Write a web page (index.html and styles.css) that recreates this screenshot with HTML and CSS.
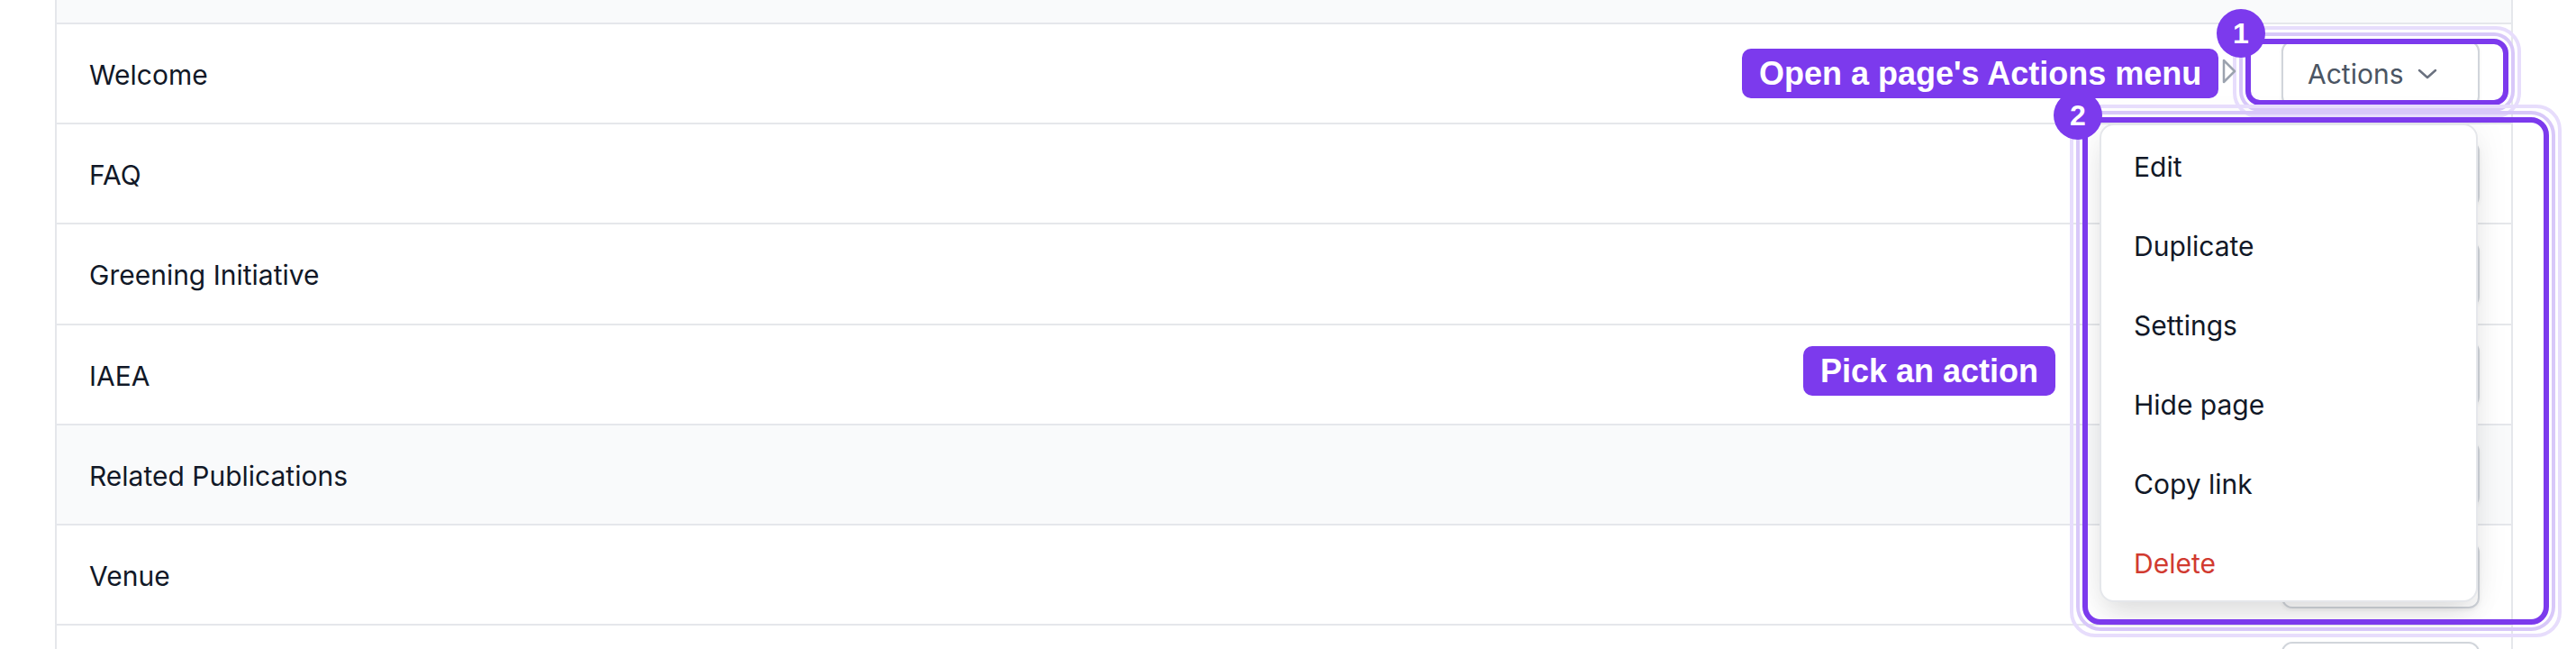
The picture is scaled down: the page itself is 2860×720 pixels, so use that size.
FILE: index.html
```html
<!DOCTYPE html>
<html lang="en">
<head>
    <meta charset="UTF-8">
    <title>Pages - Actions tour</title>
    <link rel="stylesheet" href="styles.css">
</head>
<body>

<div class="page">

    <div class="table">
        <div class="table-head"></div>

        <div class="row">
            <span class="title">Welcome</span>
            <button class="actions">Actions
                <svg width="22" height="12" viewBox="0 0 22 12"><polyline points="2,2 11,10 20,2"/></svg>
            </button>
        </div>
        <div class="row">
            <span class="title">FAQ</span>
            <button class="actions">Actions
                <svg width="22" height="12" viewBox="0 0 22 12"><polyline points="2,2 11,10 20,2"/></svg>
            </button>
        </div>
        <div class="row">
            <span class="title">Greening Initiative</span>
            <button class="actions">Actions
                <svg width="22" height="12" viewBox="0 0 22 12"><polyline points="2,2 11,10 20,2"/></svg>
            </button>
        </div>
        <div class="row">
            <span class="title">IAEA</span>
            <button class="actions">Actions
                <svg width="22" height="12" viewBox="0 0 22 12"><polyline points="2,2 11,10 20,2"/></svg>
            </button>
        </div>
        <div class="row row-hover">
            <span class="title">Related Publications</span>
            <button class="actions">Actions
                <svg width="22" height="12" viewBox="0 0 22 12"><polyline points="2,2 11,10 20,2"/></svg>
            </button>
        </div>
        <div class="row">
            <span class="title">Venue</span>
            <button class="actions">Actions
                <svg width="22" height="12" viewBox="0 0 22 12"><polyline points="2,2 11,10 20,2"/></svg>
            </button>
        </div>
        <!-- next row, only its top edge is on screen -->
        <div class="row">
            <span class="title"></span>
            <button class="actions"></button>
        </div>
    </div>

    <!-- dropdown opened from the Welcome row -->
    <div class="menu">
        <div class="menu-item">Edit</div>
        <div class="menu-item">Duplicate</div>
        <div class="menu-item">Settings</div>
        <div class="menu-item">Hide page</div>
        <div class="menu-item">Copy link</div>
        <div class="menu-item danger">Delete</div>
    </div>

    <!-- tour overlay -->
    <div class="spot spot-one"></div>
    <div class="spot spot-two"></div>
    <svg class="pointer" width="18" height="30" viewBox="0 0 18 30">
        <polygon points="3,3 3,27 15,15"/>
    </svg>
    <div class="badge badge-one">1</div>
    <div class="badge badge-two">2</div>
    <div class="callout callout-one">Open a page's Actions menu</div>
    <div class="callout callout-two">Pick an action</div>

</div>

</body>
</html>
```

FILE: styles.css
```css
* {
    box-sizing: border-box;
}

body {
    margin: 0;
    background-color: #ffffff;
    font-family: Inter, "Noto Sans", sans-serif;
    overflow: hidden;
}

.page {
    position: relative;
    height: 720px;
    overflow: hidden;
}

/* table of pages */
.table {
    margin-left: 61px;
    width: 2729px;
    border-left: 2px solid #e5e7eb;
    border-right: 2px solid #e5e7eb;
}

.table-head {
    height: 27px;
    background-color: #f9fafb;
    border-bottom: 2px solid #e5e7eb;
}

.row {
    display: flex;
    align-items: center;
    justify-content: space-between;
    height: 111.2px;
    padding: 0 35px 0 36px;
    border-bottom: 2px solid #e5e7eb;
    background-color: #ffffff;
}

.row-hover {
    background-color: #f9fafb;
}

.title {
    font-size: 30px;
    color: #111827;
    padding-top: 3px;
}

.actions {
    display: flex;
    align-items: center;
    gap: 16px;
    width: 220px;
    height: 74px;
    padding: 0 0 0 27px;
    background-color: #ffffff;
    border: 2px solid #d1d5db;
    border-radius: 12px;
    box-shadow: 0 2px 4px rgba(0, 0, 0, 0.06);
    font-family: Inter, "Noto Sans", sans-serif;
    font-size: 30px;
    color: #4b5563;
}

.actions svg {
    fill: none;
    stroke: #6b7280;
    stroke-width: 2.5;
    stroke-linecap: round;
    stroke-linejoin: round;
}

/* dropdown */
.menu {
    position: absolute;
    left: 2331px;
    top: 137px;
    width: 420px;
    height: 531px;
    padding-top: 2px;
    background-color: #ffffff;
    border: 2px solid #e5e7eb;
    border-radius: 16px;
    box-shadow: 0 20px 30px -6px rgba(0, 0, 0, 0.1), 0 0 40px rgba(0, 0, 0, 0.06);
}

.menu-item {
    display: flex;
    align-items: center;
    height: 88px;
    padding-left: 36px;
    font-size: 30px;
    color: #111827;
}

.danger {
    color: #d13a30;
}

/* tour overlay */
.spot {
    position: absolute;
    border: 6px solid #7c3aed;
    border-radius: 16px;
    outline: 4px solid #d8c8f9;
    outline-offset: 3px;
}

.spot::after {
    content: "";
    position: absolute;
    inset: -20px;
    border: 4px solid #e7ddfc;
    border-radius: 28px;
}

.spot-one {
    left: 2493px;
    top: 43px;
    width: 292px;
    height: 74px;
}

.spot-two {
    left: 2312px;
    top: 130px;
    width: 518px;
    height: 563px;
    border-radius: 20px;
}

.badge {
    position: absolute;
    width: 54px;
    height: 54px;
    border-radius: 50%;
    background-color: #7c3aed;
    color: #ffffff;
    font-family: "Liberation Sans", Arial, sans-serif;
    font-weight: bold;
    font-size: 32px;
    line-height: 54px;
    text-align: center;
}

.badge-one {
    left: 2461px;
    top: 10px;
}

.badge-two {
    left: 2280px;
    top: 101px;
}

.callout {
    position: absolute;
    height: 55px;
    padding: 0 19px;
    background-color: #7c3aed;
    border-radius: 10px;
    color: #ffffff;
    font-family: "Liberation Sans", Arial, sans-serif;
    font-weight: bold;
    font-size: 36px;
    line-height: 55px;
    white-space: nowrap;
}

.callout-one {
    left: 1934px;
    top: 54px;
}

.callout-two {
    left: 2002px;
    top: 384px;
}

.pointer {
    position: absolute;
    left: 2466px;
    top: 64px;
}

.pointer polygon {
    fill: #ffffff;
    stroke: #9ca3af;
    stroke-width: 2.5;
    stroke-linejoin: round;
}
```
